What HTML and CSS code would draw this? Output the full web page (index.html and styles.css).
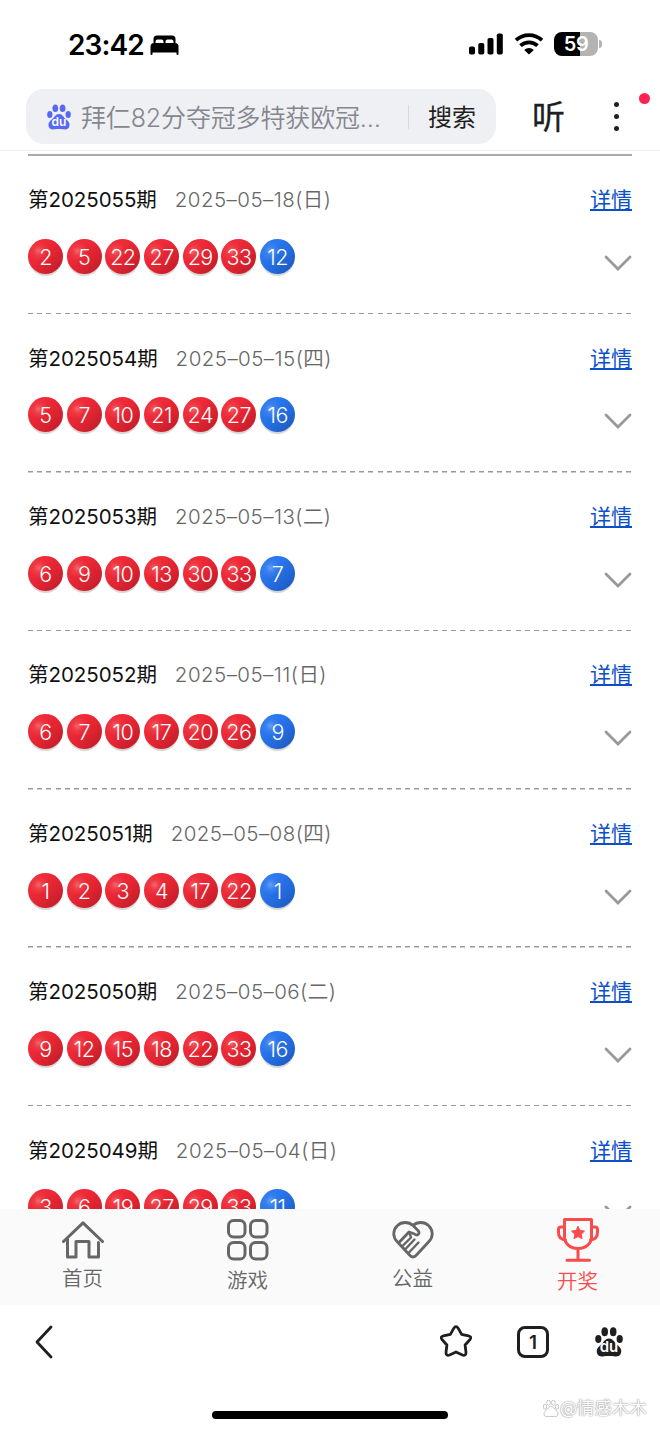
FILE: index.html
```html
<!DOCTYPE html>
<html lang="zh-CN">
	<head>
		<meta charset="UTF-8">
		<title>开奖</title>
		<link rel="stylesheet" href="styles.css">
	</head>
	<body>
		<svg class="defs" width="0" height="0">
			<symbol id="down" viewBox="0 0 28 16"><path d="M2 2l12 12L26 2" fill="none" stroke="#999" stroke-width="2.8" stroke-linecap="round"/></symbol>
			<symbol id="paw" viewBox="0 0 28 30">
				<ellipse cx="3.3" cy="12" rx="3.1" ry="4.1"/>
				<ellipse cx="9.7" cy="4.8" rx="3.3" ry="4.5"/>
				<ellipse cx="18.2" cy="4.8" rx="3.3" ry="4.5"/>
				<ellipse cx="24.7" cy="12" rx="3.1" ry="4.1"/>
				<path d="M14 11.500c4.500 0 5 4 8.500 6.500 3 2.500 4.500 5 3.500 8-1 3.500-4 3.800-7 3.300-3.500-.5-6.500-.5-10 0-3 .5-6 .2-7-3.300-1-3 .5-5.500 3.500-8 3.500-2.500 4-6.500 8.500-6.500z"/>
			</symbol>
		</svg>
		<div class="status">
			<div class="time">23:42</div>
			<svg class="bed" viewBox="0 0 28 20">
				<path d="M3 8V4a3.500 3.500 0 0 1 3.500-3.500h15A3.500 3.500 0 0 1 25 4v4h-2V6.500a2 2 0 0 0-2-2h-4a2 2 0 0 0-2 2V8h-2V6.500a2 2 0 0 0-2-2H7a2 2 0 0 0-2 2V8z"/>
				<path d="M3.500 8h21a3.500 3.500 0 0 1 3.500 3.500V19a1 1 0 0 1-2 0v-1.500H2V19a1 1 0 0 1-2 0v-7.500A3.500 3.500 0 0 1 3.500 8z"/>
			</svg>
			<svg class="signal" viewBox="0 0 34 22">
				<rect x="0" y="13.500" width="6" height="8" rx="1.800"/>
				<rect x="9.300" y="10" width="6" height="11.500" rx="1.800"/>
				<rect x="18.500" y="5" width="6" height="16.500" rx="1.800"/>
				<rect x="27.800" y="0.500" width="6" height="21" rx="1.800"/>
			</svg>
			<svg class="wifi" viewBox="0 0 30 22">
				<path d="M2 7.200a19 19 0 0 1 26 0M6.500 12.700a12.500 12.500 0 0 1 17 0" fill="none" stroke="#000" stroke-width="3.800"/>
				<path d="M10.200 17a7 7 0 0 1 9.600 0L15 21.500z"/>
			</svg>
			<div class="battery">59</div>
			<div class="cap"></div>
		</div>
		<div class="header">
			<div class="search">
				<div class="logo"><svg><use href="#paw"/></svg><span>du</span></div>
				<div class="hot">拜仁82分夺冠多特获欧冠…</div>
				<div class="submit">搜索</div>
			</div>
			<div class="listen">听</div>
			<div class="more"><i></i><i></i><i></i></div>
			<div class="dot"></div>
		</div>
		<div class="list">
			<div class="item">
				<div class="title"><b>第2025055期</b><span>2025–05–18(日)</span><a>详情</a></div>
				<div class="balls"><i>2</i><i>5</i><i>22</i><i>27</i><i>29</i><i>33</i><i class="blue">12</i><svg><use href="#down"/></svg></div>
			</div>
			<div class="item">
				<div class="title"><b>第2025054期</b><span>2025–05–15(四)</span><a>详情</a></div>
				<div class="balls"><i>5</i><i>7</i><i>10</i><i>21</i><i>24</i><i>27</i><i class="blue">16</i><svg><use href="#down"/></svg></div>
			</div>
			<div class="item">
				<div class="title"><b>第2025053期</b><span>2025–05–13(二)</span><a>详情</a></div>
				<div class="balls"><i>6</i><i>9</i><i>10</i><i>13</i><i>30</i><i>33</i><i class="blue">7</i><svg><use href="#down"/></svg></div>
			</div>
			<div class="item">
				<div class="title"><b>第2025052期</b><span>2025–05–11(日)</span><a>详情</a></div>
				<div class="balls"><i>6</i><i>7</i><i>10</i><i>17</i><i>20</i><i>26</i><i class="blue">9</i><svg><use href="#down"/></svg></div>
			</div>
			<div class="item">
				<div class="title"><b>第2025051期</b><span>2025–05–08(四)</span><a>详情</a></div>
				<div class="balls"><i>1</i><i>2</i><i>3</i><i>4</i><i>17</i><i>22</i><i class="blue">1</i><svg><use href="#down"/></svg></div>
			</div>
			<div class="item">
				<div class="title"><b>第2025050期</b><span>2025–05–06(二)</span><a>详情</a></div>
				<div class="balls"><i>9</i><i>12</i><i>15</i><i>18</i><i>22</i><i>33</i><i class="blue">16</i><svg><use href="#down"/></svg></div>
			</div>
			<div class="item">
				<div class="title"><b>第2025049期</b><span>2025–05–04(日)</span><a>详情</a></div>
				<div class="balls"><i>3</i><i>6</i><i>19</i><i>27</i><i>29</i><i>33</i><i class="blue">11</i><svg><use href="#down"/></svg></div>
			</div>
		</div>
		<div class="nav">
			<div class="tab home">
				<svg viewBox="0 0 42 38"><path d="M1.500 20.500L21 1.800l19.500 18.700M5.500 18v18h8.500V20.500h13V36h9.500V21.500"/></svg>
				<span>首页</span>
			</div>
			<div class="tab game">
				<svg viewBox="0 0 42 42"><rect x="1.500" y="1.500" width="16.500" height="16.500" rx="5"/><rect x="23.500" y="1.500" width="16.500" height="16.500" rx="5"/><rect x="1.500" y="23.500" width="16.500" height="16.500" rx="5"/><rect x="23.500" y="23.500" width="16.500" height="16.500" rx="5"/></svg>
				<span>游戏</span>
			</div>
			<div class="tab love">
				<svg viewBox="0 0 42 38"><path d="M21 4.500C17 .5 9.500.5 5.500 4.500c-5 5-5 11.500 0 16.500L18 34.500c2 2 4 2 6 0L36.500 21c5-5 5-11.500 0-16.500-4-4-11.500-4-15.500 0l5 5c2.500 3-.5 6-3.500 3.500L17 11 6.500 22" stroke-width="2.800"/><path d="M17.500 12l1.500 4.500-9 9M22.500 18.500l-9 9.500M26.500 21.500l-9.500 10" stroke-width="2.400"/></svg>
				<span>公益</span>
			</div>
			<div class="tab prize">
				<svg viewBox="0 0 42 44"><path d="M7.500 1.500h27v17c0 7-5.500 12-13.500 12s-13.500-5-13.500-12zM7.500 9H4c-1.500 0-2.500 1-2.500 2.500v3c0 4 2.500 7 7 7.500M34.500 9H38c1.500 0 2.500 1 2.500 2.500v3c0 4-2.500 7-7 7.500M21 30.500V42M10 42.300h22.500"/><path class="fill" d="M21 8.500l2 4 4.500.6-3.300 3.100.8 4.500-4-2.200-4 2.200.8-4.500-3.300-3.100 4.500-.6z"/></svg>
				<span>开奖</span>
			</div>
		</div>
		<div class="toolbar">
			<svg class="back" viewBox="0 0 18 34"><path d="M16 2L2 17l14 15"/></svg>
			<svg class="star" viewBox="0 0 34 34"><path d="M14.700 3.400q2.300-3.600 4.600 0l3.300 6 6.900 1.400q3.800 1 1.300 4l-4.700 5.200.9 7.400q0 3.800-3.600 2.600L17 27l-6.400 3q-3.600 1.200-3.600-2.600l.9-7.400-4.700-5.200q-2.500-3 1.300-4l6.900-1.400z"/></svg>
			<div class="pages">1</div>
			<div class="du"><svg><use href="#paw"/></svg><span>du</span></div>
		</div>
		<div class="bar"></div>
		<div class="mark"><svg><use href="#paw"/></svg>@情感木木</div>
	</body>
</html>
```
FILE: styles.css
```css
*{
	padding: 0;
	margin: 0;
	box-sizing: border-box;
}
body{
	position: relative;
	width: 660px;
	height: 1431px;
	overflow: hidden;
	background: #fff;
	font-family: Inter, "Noto Sans CJK SC", sans-serif;
	display: flex;
	flex-direction: column;
}
b, i{
	font-weight: normal;
	font-style: normal;
}
svg{
	display: block;
	flex: none;
}
.defs{
	position: absolute;
}
/* status bar */
.status{
	height: 88px;
	flex: none;
	display: flex;
	align-items: center;
	padding-left: 68px;
}
.time{
	width: 82px;
	font-size: 28px;
	font-weight: 600;
	letter-spacing: -0.9px;
	line-height: 36px;
	padding-top: 2px;
}
.bed{
	width: 29px;
	height: 20px;
	margin-top: 2px;
}
.signal{
	width: 34px;
	height: 22px;
	margin-left: 290px;
}
.wifi{
	width: 30px;
	height: 22px;
	margin-left: 11px;
}
.battery{
	width: 44px;
	height: 24px;
	margin-left: 10px;
	border-radius: 8px;
	background: linear-gradient(90deg, #000 59%, #b3b3b3 59%);
	color: #fff;
	font-size: 20px;
	font-weight: 600;
	line-height: 25px;
	letter-spacing: -0.5px;
	text-align: center;
}
.cap{
	width: 3px;
	height: 8px;
	margin-left: 1px;
	border-radius: 0 4px 4px 0;
	background: #b3b3b3;
}
/* search */
.header{
	height: 63px;
	flex: none;
	display: flex;
	padding: 1px 0 0 26px;
	border-bottom: 1px solid #f2f2f2;
}
.search{
	width: 470px;
	height: 55px;
	display: flex;
	align-items: center;
	border-radius: 18px;
	background: #eff0f3;
	padding-left: 21px;
}
.logo{
	position: relative;
	width: 24px;
	height: 26px;
	color: #5668f4;
}
.logo svg, .du svg{
	width: 100%;
	height: 100%;
	fill: currentColor;
}
.logo span, .du span{
	position: absolute;
	left: 0;
	width: 100%;
	text-align: center;
	color: #fff;
	font-weight: 600;
}
.logo span{
	bottom: 2px;
	font-size: 12px;
	line-height: 12px;
}
.hot{
	width: 317px;
	margin-left: 10px;
	font-size: 25px;
	font-weight: 350;
	letter-spacing: -0.15px;
	color: #85878e;
	white-space: nowrap;
	line-height: 36px;
	padding-top: 2px;
}
.submit{
	padding: 1px 0 0 19px;
	margin-left: 10px;
	border-left: 1px solid #d9dade;
	font-size: 24px;
	line-height: 23px;
	color: #1f1f1f;
	white-space: nowrap;
}
.listen{
	width: 34px;
	margin-left: 36px;
	font-size: 33px;
	line-height: 57px;
	color: #1f1f1f;
	-webkit-text-stroke: 0.3px #1f1f1f;
}
.more{
	display: flex;
	flex-direction: column;
	gap: 7px;
	margin: 13px 0 0 48px;
}
.more i{
	width: 5px;
	height: 5px;
	border-radius: 50%;
	background: #1f1f1f;
}
.dot{
	width: 11px;
	height: 11px;
	margin: 4px 0 0 20px;
	border-radius: 50%;
	background: #fd2350;
}
/* draw list */
.list{
	height: 1058px;
	flex: none;
	overflow: hidden;
	padding: 3px 28px 0;
}
.list:before{
	content: "";
	display: block;
	height: 2px;
	background: #aaa;
}
.item{
	height: 158.4px;
	padding-top: 29.2px;
	background: repeating-linear-gradient(90deg, #999 0, #999 5px, transparent 5px, transparent 9.2px) 0 100% / 100% 1.500px no-repeat;
}
.title{
	height: 30px;
	display: flex;
	font-size: 20.5px;
	line-height: 30px;
	white-space: nowrap;
}
.title b{
	color: #111;
	font-weight: 380;
	letter-spacing: -0.05px;
}
.title span{
	margin-left: 18px;
	font-weight: 350;
	letter-spacing: 0.45px;
	color: #666;
}
.title a{
	margin-left: auto;
	font-size: 21px;
	font-weight: 380;
	color: #0b50c8;
	text-decoration: underline;
	text-decoration-thickness: 1.500px;
	text-underline-offset: 2px;
}
.balls{
	display: flex;
	gap: 3.700px;
	margin-top: 23.800px;
}
.balls i{
	width: 35px;
	height: 35px;
	border-radius: 50%;
	background: radial-gradient(circle at 30% 34%, #f5666a 0, #ee3a44 14%, transparent 30%), linear-gradient(135deg, #f02a38 30%, #df2431 60%, #b81a29 100%);
	box-shadow: 0 3px 1px -1px #d4d4d4;
	color: #fff;
	font-size: 21.5px;
	font-weight: 350;
	line-height: 36px;
	text-align: center;
	letter-spacing: -0.5px;
}
.balls .blue{
	background: radial-gradient(circle at 30% 34%, #66a0f6 0, #3a80ee 14%, transparent 30%), linear-gradient(135deg, #2a78f0 30%, #246bdd 60%, #1a54b5 100%);
}
.balls svg{
	width: 28px;
	height: 16px;
	margin: 16px 0 0 auto;
}
/* bottom tabs */
.nav{
	height: 96px;
	flex: none;
	display: flex;
	background: #fafafa;
}
.tab{
	flex: 1;
	display: flex;
	flex-direction: column;
	align-items: center;
	color: #666;
	font-size: 20.500px;
	font-weight: 350;
	line-height: 30px;
}
.tab svg{
	width: 42px;
	fill: none;
	stroke: currentColor;
	stroke-width: 3;
	stroke-linejoin: round;
	stroke-linecap: round;
}
.tab .fill{
	fill: currentColor;
	stroke-width: 1;
}
.home svg, .love svg{
	height: 38px;
	margin: 12px 0 5px;
}
.game svg{
	height: 42px;
	margin: 10px 0 5px;
}
.prize svg{
	height: 44px;
	margin: 9px 0 5px;
}
.prize{
	color: #f94b4b;
}
/* browser toolbar */
.toolbar{
	height: 74px;
	flex: none;
	display: flex;
	align-items: center;
	padding-left: 35px;
}
.back, .star{
	fill: none;
	stroke: #1f1f1f;
	stroke-width: 2.800;
	stroke-linecap: round;
	stroke-linejoin: round;
}
.back{
	width: 18px;
	height: 34px;
}
.star{
	width: 34px;
	height: 34px;
	margin-left: 386px;
}
.pages{
	width: 32px;
	height: 32px;
	margin-left: 44px;
	border: 3px solid #1f1f1f;
	border-radius: 8px;
	font-size: 19px;
	font-weight: 600;
	line-height: 27px;
	text-align: center;
	color: #1f1f1f;
}
.du{
	position: relative;
	width: 28px;
	height: 30px;
	margin-left: 46px;
	color: #1f1f1f;
}
.du span{
	bottom: 3px;
	font-size: 15px;
	line-height: 14px;
}
.bar{
	width: 236px;
	height: 8px;
	margin: 32px auto 0;
	border-radius: 4px;
	background: #000;
}
.mark{
	position: absolute;
	left: 543px;
	top: 1396px;
	display: flex;
	align-items: center;
	font-size: 17.500px;
	line-height: 24px;
	color: #fff;
	text-shadow: 0 0 1px #888, 0 0 2px #aaa;
	white-space: nowrap;
}
.mark svg{
	width: 16px;
	height: 17px;
	margin-right: 1px;
	overflow: visible;
	fill: #fff;
	stroke: #bbb;
	stroke-width: 1.500px;
}
```
